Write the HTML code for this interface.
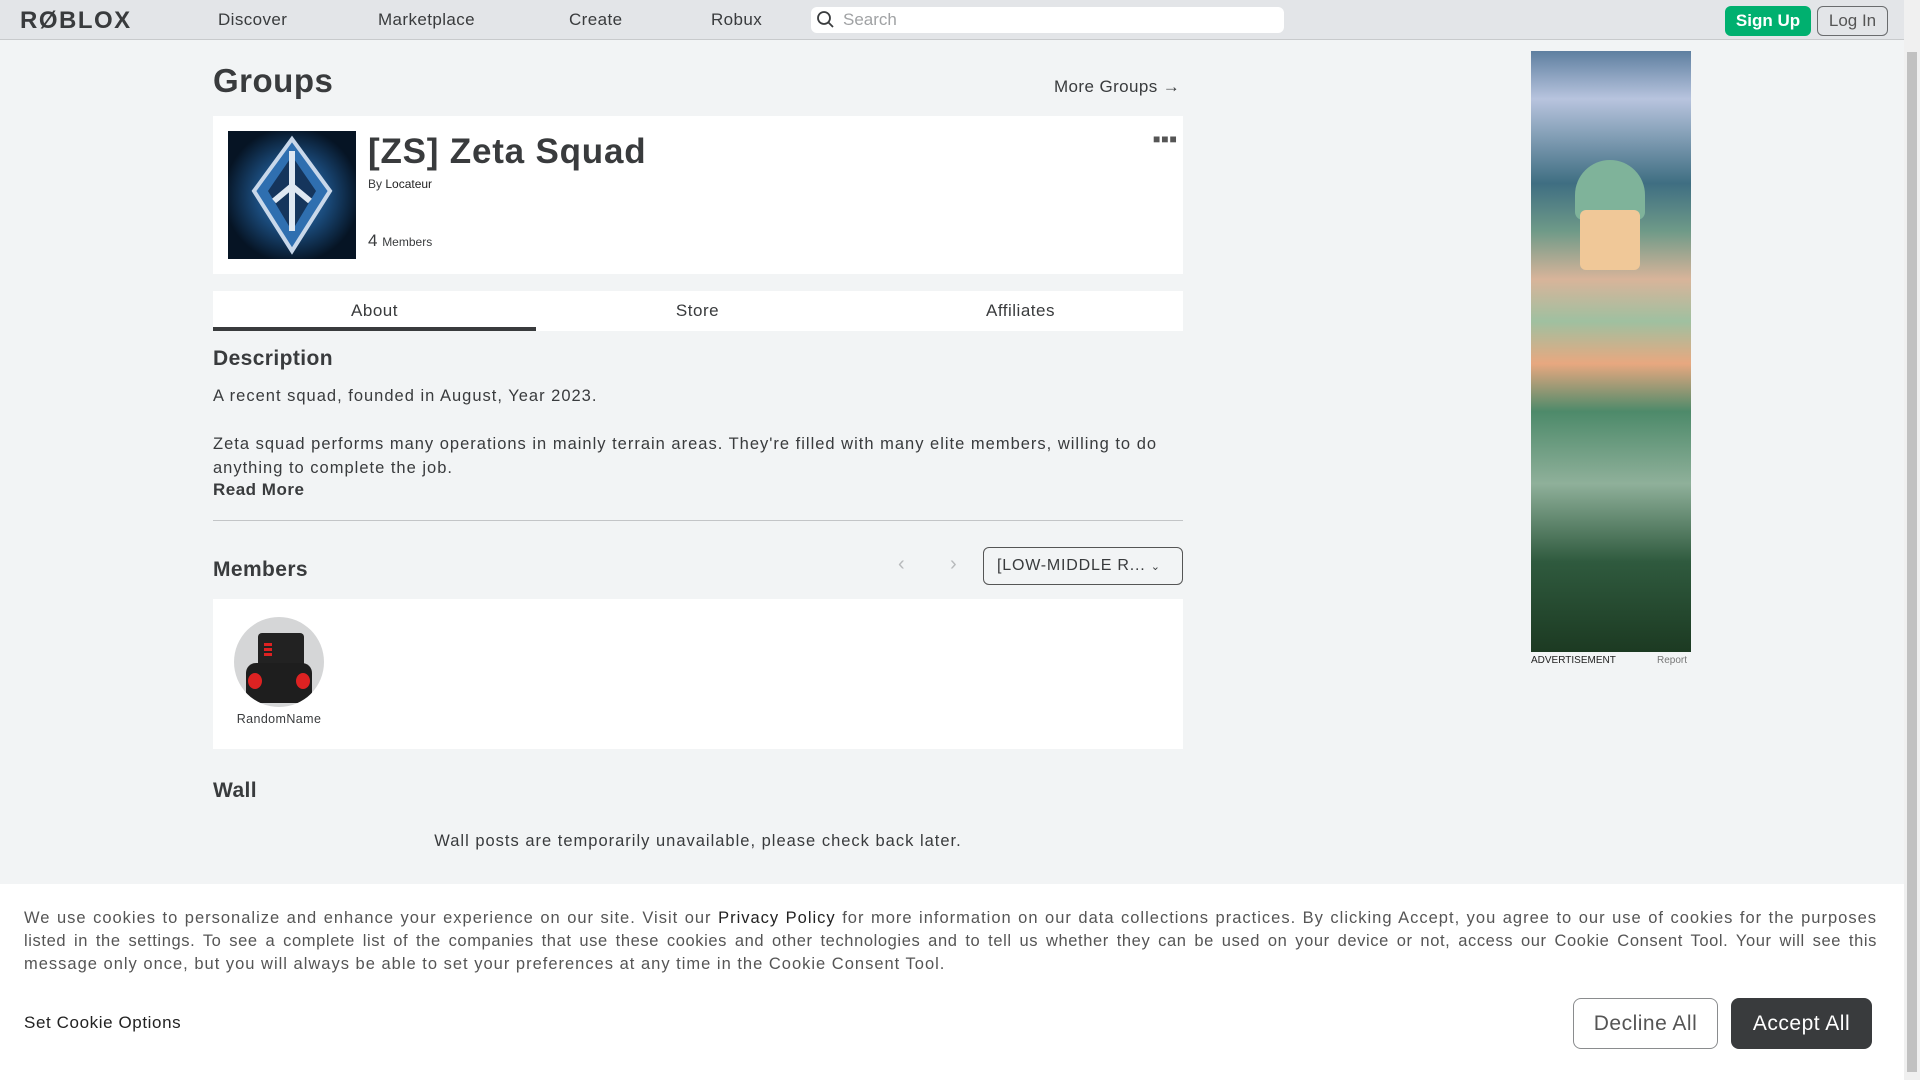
<!DOCTYPE html>
<html><head><meta charset="utf-8"><style>
*{box-sizing:border-box;margin:0;padding:0}
body{width:1920px;height:1080px;overflow:hidden;background:#f2f4f5;font-family:"Liberation Sans",sans-serif;color:#393b3d;position:relative}
.a{position:absolute}
.hdr{left:0;top:0;width:1904px;height:40px;background:#e3e5e8;border-bottom:1px solid #c8cacc}
.nav{top:10px;font-size:17px;color:#393b3d;letter-spacing:.4px}
.sb{left:1904px;top:0;width:16px;height:1080px;background:#f0f0f0}
.card{background:#fff}
</style></head><body>
<div class="a hdr"></div>
<div class="a" style="left:20px;top:7px;font-size:24px;font-weight:bold;letter-spacing:1.5px;color:#393b3d">RØBLOX</div>
<div class="a nav" style="left:218px">Discover</div>
<div class="a nav" style="left:378px">Marketplace</div>
<div class="a nav" style="left:569px">Create</div>
<div class="a nav" style="left:711px">Robux</div>
<div class="a" style="left:811px;top:7px;width:473px;height:26px;background:#fff;border-radius:6px"></div>
<svg class="a" style="left:816px;top:10px" width="20" height="20" viewBox="0 0 20 20"><circle cx="8" cy="8" r="6" fill="none" stroke="#393b3d" stroke-width="1.8"/><path d="M12.5 12.5L17 17" stroke="#393b3d" stroke-width="1.8"/></svg>
<div class="a" style="left:843px;top:10px;font-size:17px;color:#a0a2a4">Search</div>
<div class="a" style="left:1725px;top:6px;width:86px;height:30px;background:#00b06f;border-radius:6px;color:#fff;font-weight:bold;font-size:17px;text-align:center;line-height:30px">Sign Up</div>
<div class="a" style="left:1817px;top:6px;width:71px;height:30px;border:1px solid #6a6c6e;border-radius:6px;font-size:17px;text-align:center;line-height:28px;color:#555">Log In</div>
<div class="a sb"></div>
<div class="a" style="left:1907px;top:52px;width:10px;height:1020px;background:#c1c1c1"></div>

<div class="a" style="left:213px;top:62px;font-size:33px;font-weight:bold;letter-spacing:.5px">Groups</div>
<div class="a" style="left:1054px;top:77px;font-size:17px;letter-spacing:.4px">More Groups →</div>

<div class="a card" style="left:213px;top:116px;width:970px;height:158px"></div>
<div class="a" style="left:228px;top:131px;width:128px;height:128px;background:radial-gradient(circle at 50% 50%,#3f7fbd 0,#1a4a7a 40%,#061424 75%)"></div>
<svg class="a" style="left:228px;top:131px" width="128" height="128" viewBox="0 0 128 128"><path d="M64 8L102 60L64 120L26 60Z" fill="#2f6fb0" stroke="#c9d8ea" stroke-width="4"/><path d="M64 25L88 60L64 100L40 60Z" fill="#15355c"/><path d="M64 20V100M46 70L64 55L82 70" stroke="#dfe8f2" stroke-width="6" fill="none"/></svg>
<div class="a" style="left:368px;top:132px;font-size:35px;font-weight:bold;letter-spacing:.8px">[ZS] Zeta Squad</div>
<div class="a" style="left:368px;top:177px;font-size:12px">By <span style="color:#222">Locateur</span></div>
<div class="a" style="left:368px;top:231px;font-size:17px">4 <span style="font-size:12px">Members</span></div>
<div class="a" style="left:1153px;top:132px;font-size:12px;letter-spacing:1px;color:#555">■■■</div>

<div class="a card" style="left:213px;top:291px;width:970px;height:40px"></div>
<div class="a" style="left:213px;top:327px;width:323px;height:4px;background:#393b3d"></div>
<div class="a" style="left:213px;top:301px;width:323px;text-align:center;font-size:17px;letter-spacing:.5px">About</div>
<div class="a" style="left:536px;top:301px;width:323px;text-align:center;font-size:17px;letter-spacing:.5px">Store</div>
<div class="a" style="left:859px;top:301px;width:323px;text-align:center;font-size:17px;letter-spacing:.5px">Affiliates</div>

<div class="a" style="left:213px;top:347px;font-size:21px;font-weight:bold;letter-spacing:.4px">Description</div>
<div class="a" style="left:213px;top:384px;font-size:16.5px;line-height:24px;width:1000px;letter-spacing:1px">A recent squad, founded in August, Year 2023.<br><br>Zeta squad performs many operations in mainly terrain areas. They're filled with many elite members, willing to do<br>anything to complete the job.</div>
<div class="a" style="left:213px;top:480px;font-size:17px;font-weight:bold;letter-spacing:.5px">Read More</div>
<div class="a" style="left:213px;top:520px;width:970px;height:1px;background:#c3c5c7"></div>

<div class="a" style="left:213px;top:558px;font-size:21px;font-weight:bold;letter-spacing:.4px">Members</div>
<div class="a" style="left:898px;top:553px;font-size:20px;color:#b8babc">‹</div>
<div class="a" style="left:950px;top:553px;font-size:20px;color:#b8babc">›</div>
<div class="a" style="left:983px;top:547px;width:200px;height:38px;border:1px solid #555;border-radius:6px;font-size:16px;line-height:36px;padding-left:13px;letter-spacing:.8px">[LOW-MIDDLE R... <span style="font-size:11px">⌄</span></div>

<div class="a card" style="left:213px;top:599px;width:970px;height:150px"></div>
<div class="a" style="left:234px;top:617px;width:90px;height:90px;border-radius:50%;background:#d5d6d7;overflow:hidden">
 <div class="a" style="left:24px;top:16px;width:46px;height:40px;background:#222;border-radius:4px"></div>
 <div class="a" style="left:12px;top:46px;width:66px;height:40px;background:#1e1e1e;border-radius:10px"></div>
 <div class="a" style="left:14px;top:56px;width:14px;height:16px;background:#d22;border-radius:50%"></div>
 <div class="a" style="left:62px;top:56px;width:14px;height:16px;background:#d22;border-radius:50%"></div>
 <div class="a" style="left:30px;top:26px;width:8px;height:3px;background:#d22;box-shadow:0 5px #d22,0 10px #d22"></div>
</div>
<div class="a" style="left:214px;top:712px;width:130px;text-align:center;font-size:12.5px;letter-spacing:.4px">RandomName</div>

<div class="a" style="left:213px;top:779px;font-size:21px;font-weight:bold;letter-spacing:.4px">Wall</div>
<div class="a" style="left:213px;top:832px;width:970px;text-align:center;font-size:16.5px;letter-spacing:1px">Wall posts are temporarily unavailable, please check back later.</div>

<div class="a" style="left:1531px;top:51px;width:160px;height:601px;background:linear-gradient(180deg,#5e7fa0 0%,#b8c4de 8%,#3f6e82 22%,#6f9a88 30%,#d8b49a 38%,#9fc0a0 45%,#e8a880 52%,#4d8a6a 60%,#8fb09a 72%,#2f5a3e 85%,#1c3a22 100%)"></div>
<div class="a" style="left:1575px;top:160px;width:70px;height:60px;border-radius:35px 35px 8px 8px;background:#7fb39a"></div>
<div class="a" style="left:1580px;top:210px;width:60px;height:60px;background:#f0c898;border-radius:6px"></div>
<div class="a" style="left:1531px;top:655px;font-size:10px;color:#222">ADVERTISEMENT</div>
<div class="a" style="left:1657px;top:655px;font-size:10px;color:#777">Report</div>

<div class="a" style="left:0;top:884px;width:1904px;height:196px;background:#fff"></div>
<div class="a" style="left:24px;top:907px;width:1853px;font-size:16.5px;line-height:23px;color:#555;letter-spacing:1px">
<div style="text-align:justify;text-align-last:justify">We use cookies to personalize and enhance your experience on our site. Visit our <b style="color:#222;font-weight:normal">Privacy Policy</b> for more information on our data collections practices. By clicking Accept, you agree to our use of cookies for the purposes</div>
<div style="text-align:justify;text-align-last:justify;letter-spacing:.6px">listed in the settings. To see a complete list of the companies that use these cookies and other technologies and to tell us whether they can be used on your device or not, access our Cookie Consent Tool. Your will see this</div>
<div>message only once, but you will always be able to set your preferences at any time in the Cookie Consent Tool.</div>
</div>
<div class="a" style="left:24px;top:1013px;font-size:17px;color:#222;letter-spacing:.6px">Set Cookie Options</div>
<div class="a" style="left:1573px;top:998px;width:145px;height:51px;border:1px solid #8a8c8e;border-radius:8px;font-size:21px;text-align:center;line-height:49px;color:#555;letter-spacing:.5px">Decline All</div>
<div class="a" style="left:1731px;top:998px;width:141px;height:51px;background:#393b3d;border-radius:8px;font-size:21px;text-align:center;line-height:51px;color:#fff;letter-spacing:.5px">Accept All</div>
</body></html>
